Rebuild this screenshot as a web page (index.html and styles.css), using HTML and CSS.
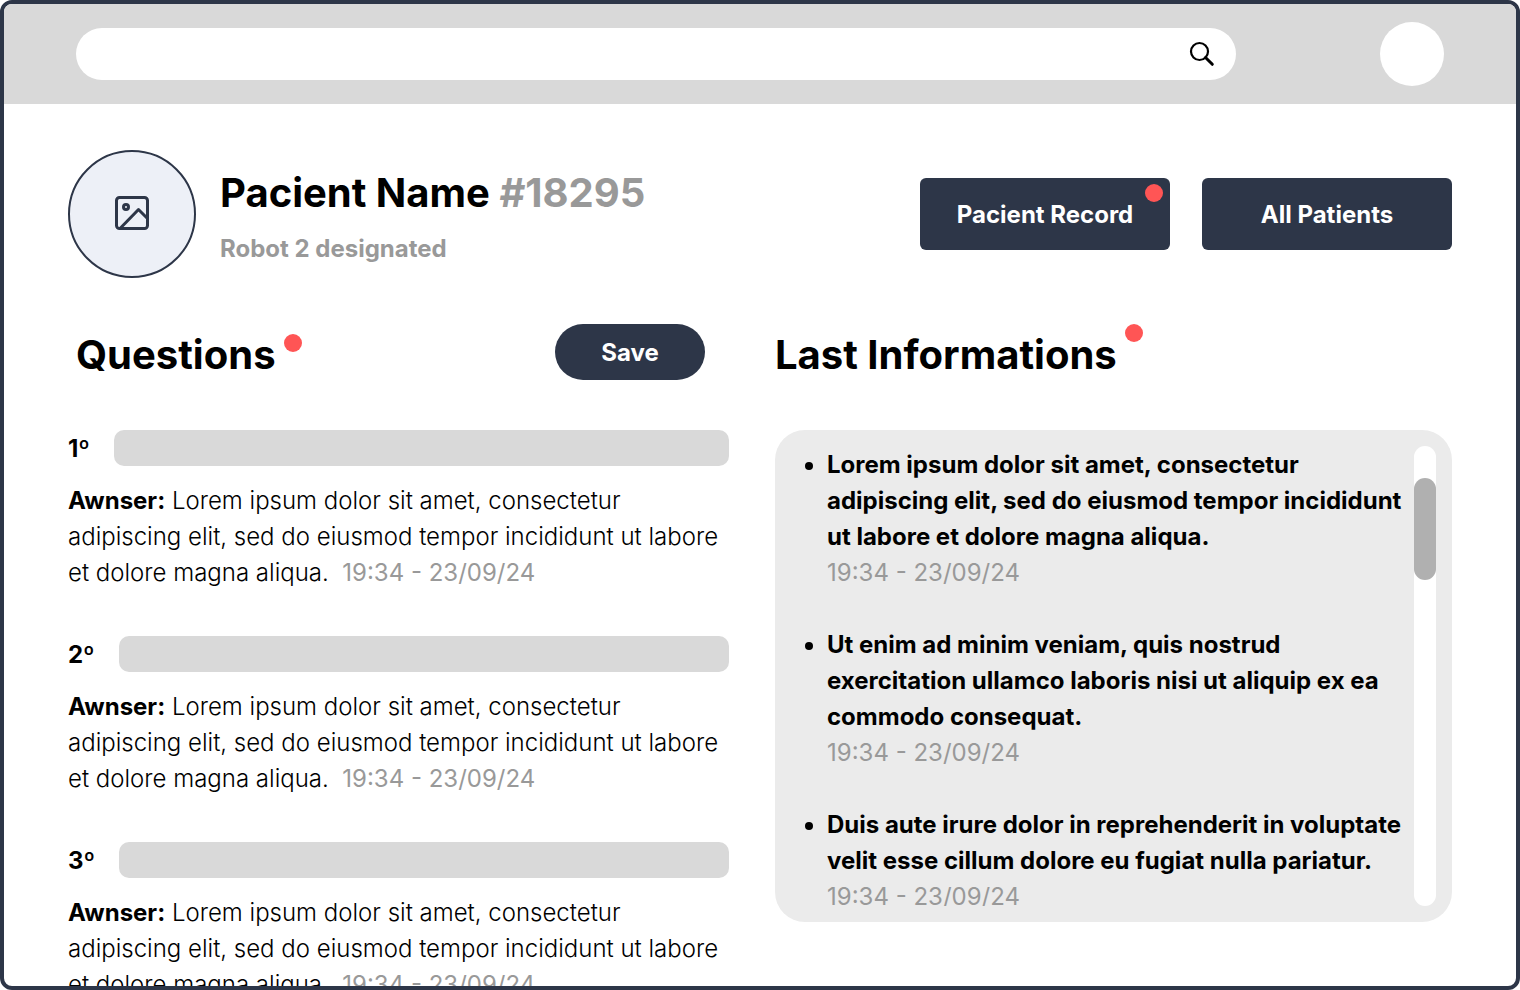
FILE: index.html
```html
<!DOCTYPE html>
<html lang="en">
<head>
<meta charset="utf-8">
<meta name="viewport" content="width=device-width, initial-scale=1">
<title>Pacient Name</title>
<link rel="stylesheet" href="styles.css">
</head>
<body>
<div class="frame">
  <header class="topbar">
    <form class="search" role="search">
      <input class="search-input" type="search" aria-label="Search">
      <button class="search-button" type="submit" aria-label="Search">
        <svg width="26" height="26" viewBox="0 0 26 26" fill="none" stroke="currentColor" stroke-width="2.2">
          <circle cx="10.5" cy="10.5" r="8.5"/>
          <path d="M16.5 16.5L23.3 23.3" stroke-width="3" stroke-linecap="round"/>
        </svg>
      </button>
    </form>
    <a class="account" href="#" aria-label="Account"></a>
  </header>

  <main class="content">
    <section class="patient">
      <div class="photo">
        <svg width="40" height="40" viewBox="0 0 40 40" fill="none" stroke="currentColor" stroke-width="3" stroke-linejoin="round">
          <rect x="4.5" y="3.5" width="31" height="31" rx="3"/>
          <circle cx="14" cy="13" r="2.5"/>
          <path d="M8.500 34L26.500 15.500L35.500 24.500"/>
        </svg>
      </div>
      <div class="identity">
        <h1 class="title">Pacient Name <span class="muted">#18295</span></h1>
        <p class="robot muted">Robot 2 designated</p>
      </div>
      <nav class="actions">
        <button class="action" type="button">Pacient Record<span class="dot dot-corner"></span></button>
        <button class="action" type="button">All Patients</button>
      </nav>
    </section>

    <div class="columns">
      <section class="questions">
        <div class="section-head section-head-inset">
          <h2 class="title">Questions</h2>
          <span class="dot"></span>
          <button class="save" type="button">Save</button>
        </div>
        <article class="question">
          <div class="prompt"><label class="number" for="q1">1º</label><input class="prompt-input" id="q1" type="text"></div>
          <p class="answer"><strong>Awnser:</strong> Lorem ipsum dolor sit amet, consectetur adipiscing elit, sed do eiusmod tempor incididunt ut labore et dolore magna aliqua.&nbsp; <time class="time">19:34 - 23/09/24</time></p>
        </article>
        <article class="question">
          <div class="prompt"><label class="number" for="q2">2º</label><input class="prompt-input" id="q2" type="text"></div>
          <p class="answer"><strong>Awnser:</strong> Lorem ipsum dolor sit amet, consectetur adipiscing elit, sed do eiusmod tempor incididunt ut labore et dolore magna aliqua.&nbsp; <time class="time">19:34 - 23/09/24</time></p>
        </article>
        <article class="question">
          <div class="prompt"><label class="number" for="q3">3º</label><input class="prompt-input" id="q3" type="text"></div>
          <p class="answer"><strong>Awnser:</strong> Lorem ipsum dolor sit amet, consectetur adipiscing elit, sed do eiusmod tempor incididunt ut labore et dolore magna aliqua.&nbsp; <time class="time">19:34 - 23/09/24</time></p>
        </article>
      </section>

      <section class="informations">
        <div class="section-head">
          <h2 class="title">Last Informations</h2>
          <span class="dot dot-raised"></span>
        </div>
        <div class="panel">
          <ul class="notes">
            <li class="note">Lorem ipsum dolor sit amet, consectetur adipiscing elit, sed do eiusmod tempor incididunt ut labore et dolore magna aliqua.<br><time class="time">19:34 - 23/09/24</time></li>
            <li class="note">Ut enim ad minim veniam, quis nostrud exercitation ullamco laboris nisi ut aliquip ex ea commodo consequat.<br><time class="time">19:34 - 23/09/24</time></li>
            <li class="note">Duis aute irure dolor in reprehenderit in voluptate velit esse cillum dolore eu fugiat nulla pariatur.<br><time class="time">19:34 - 23/09/24</time></li>
          </ul>
          <div class="track"><div class="thumb"></div></div>
        </div>
      </section>
    </div>
  </main>
</div>
</body>
</html>
```
FILE: styles.css
```css
* { box-sizing: border-box; }

body {
  margin: 0;
  background: #fff;
  color: #000;
  font: 300 24px/36px Inter, sans-serif;
}

h1, h2, p, ul { margin: 0; padding: 0; }

strong { font-weight: 700; }

button, input { border: 0; font: inherit; }

button { padding: 0; cursor: pointer; }

.frame {
  height: 100vh;
  overflow: hidden;
  border: 4px solid #2d3648;
  border-radius: 12px;
}

.topbar {
  display: flex;
  align-items: center;
  justify-content: space-between;
  gap: 144px;
  height: 100px;
  padding: 0 72px;
  background: #d9d9d9;
}

.search {
  display: flex;
  flex: 1;
  align-items: center;
  height: 52px;
  padding: 0 21px 0 24px;
  border-radius: 26px;
  background: #fff;
}

.search-input {
  flex: 1;
  min-width: 0;
  background: none;
  outline: 0;
}

.search-button {
  display: flex;
  background: none;
  color: #000;
}

.account {
  width: 64px;
  height: 64px;
  border-radius: 50%;
  background: #fff;
}

.content { padding: 46px 64px 0; }

.patient {
  display: flex;
  align-items: center;
  gap: 24px;
}

.photo {
  display: flex;
  align-items: center;
  justify-content: center;
  width: 128px;
  height: 128px;
  border: 2px solid #2d3648;
  border-radius: 50%;
  background: #edf0f7;
  color: #2d3648;
}

.identity {
  display: grid;
  gap: 8px;
  padding-top: 2px;
}

.title {
  font-size: 40px;
  font-weight: 700;
  line-height: 60px;
}

.muted { color: #999; }

.robot { font-weight: 700; }

.actions {
  display: flex;
  gap: 32px;
  margin-left: auto;
}

.action {
  position: relative;
  width: 250px;
  height: 72px;
  padding-top: 2px;
  border-radius: 6px;
  background: #2d3648;
  color: #fff;
  font-weight: 700;
}

.dot {
  width: 18px;
  height: 18px;
  border-radius: 50%;
  background: #ff5555;
}

.dot-corner {
  position: absolute;
  top: 6px;
  right: 7px;
}

.columns {
  display: grid;
  grid-template-columns: 661fr 677fr;
  gap: 46px;
  margin-top: 46px;
}

.section-head {
  display: flex;
  align-items: flex-start;
  gap: 8px;
  height: 60px;
  margin-bottom: 46px;
}

.section-head .title { padding-top: 1px; }

.section-head .dot { margin-top: 10px; }

.section-head .dot-raised { margin-top: 0; }

.section-head-inset { padding: 0 24px 0 8px; }

.save {
  width: 150px;
  height: 56px;
  padding-top: 2px;
  margin-left: auto;
  border-radius: 28px;
  background: #2d3648;
  color: #fff;
  font-weight: 700;
}

.question { margin-bottom: 45px; }

.prompt {
  display: flex;
  align-items: flex-start;
  gap: 24px;
  margin-bottom: 16px;
}

.number {
  padding-top: 1px;
  font-weight: 700;
}

.prompt-input {
  flex: 1;
  min-width: 0;
  height: 36px;
  padding: 0 12px;
  border-radius: 10px;
  background: #d9d9d9;
}

.panel {
  display: flex;
  gap: 8px;
  height: 492px;
  padding: 16px;
  border-radius: 30px;
  background: #ebebeb;
}

.notes {
  flex: 1;
  overflow: hidden;
  padding: 1px 0 0 36px;
  font-weight: 700;
}

.note { margin-bottom: 36px; }

.time {
  color: #999;
  font-weight: 400;
}

.track {
  width: 22px;
  padding-top: 32px;
  border-radius: 11px;
  background: #fff;
}

.thumb {
  height: 102px;
  border-radius: 11px;
  background: #b0b0b0;
}
```
